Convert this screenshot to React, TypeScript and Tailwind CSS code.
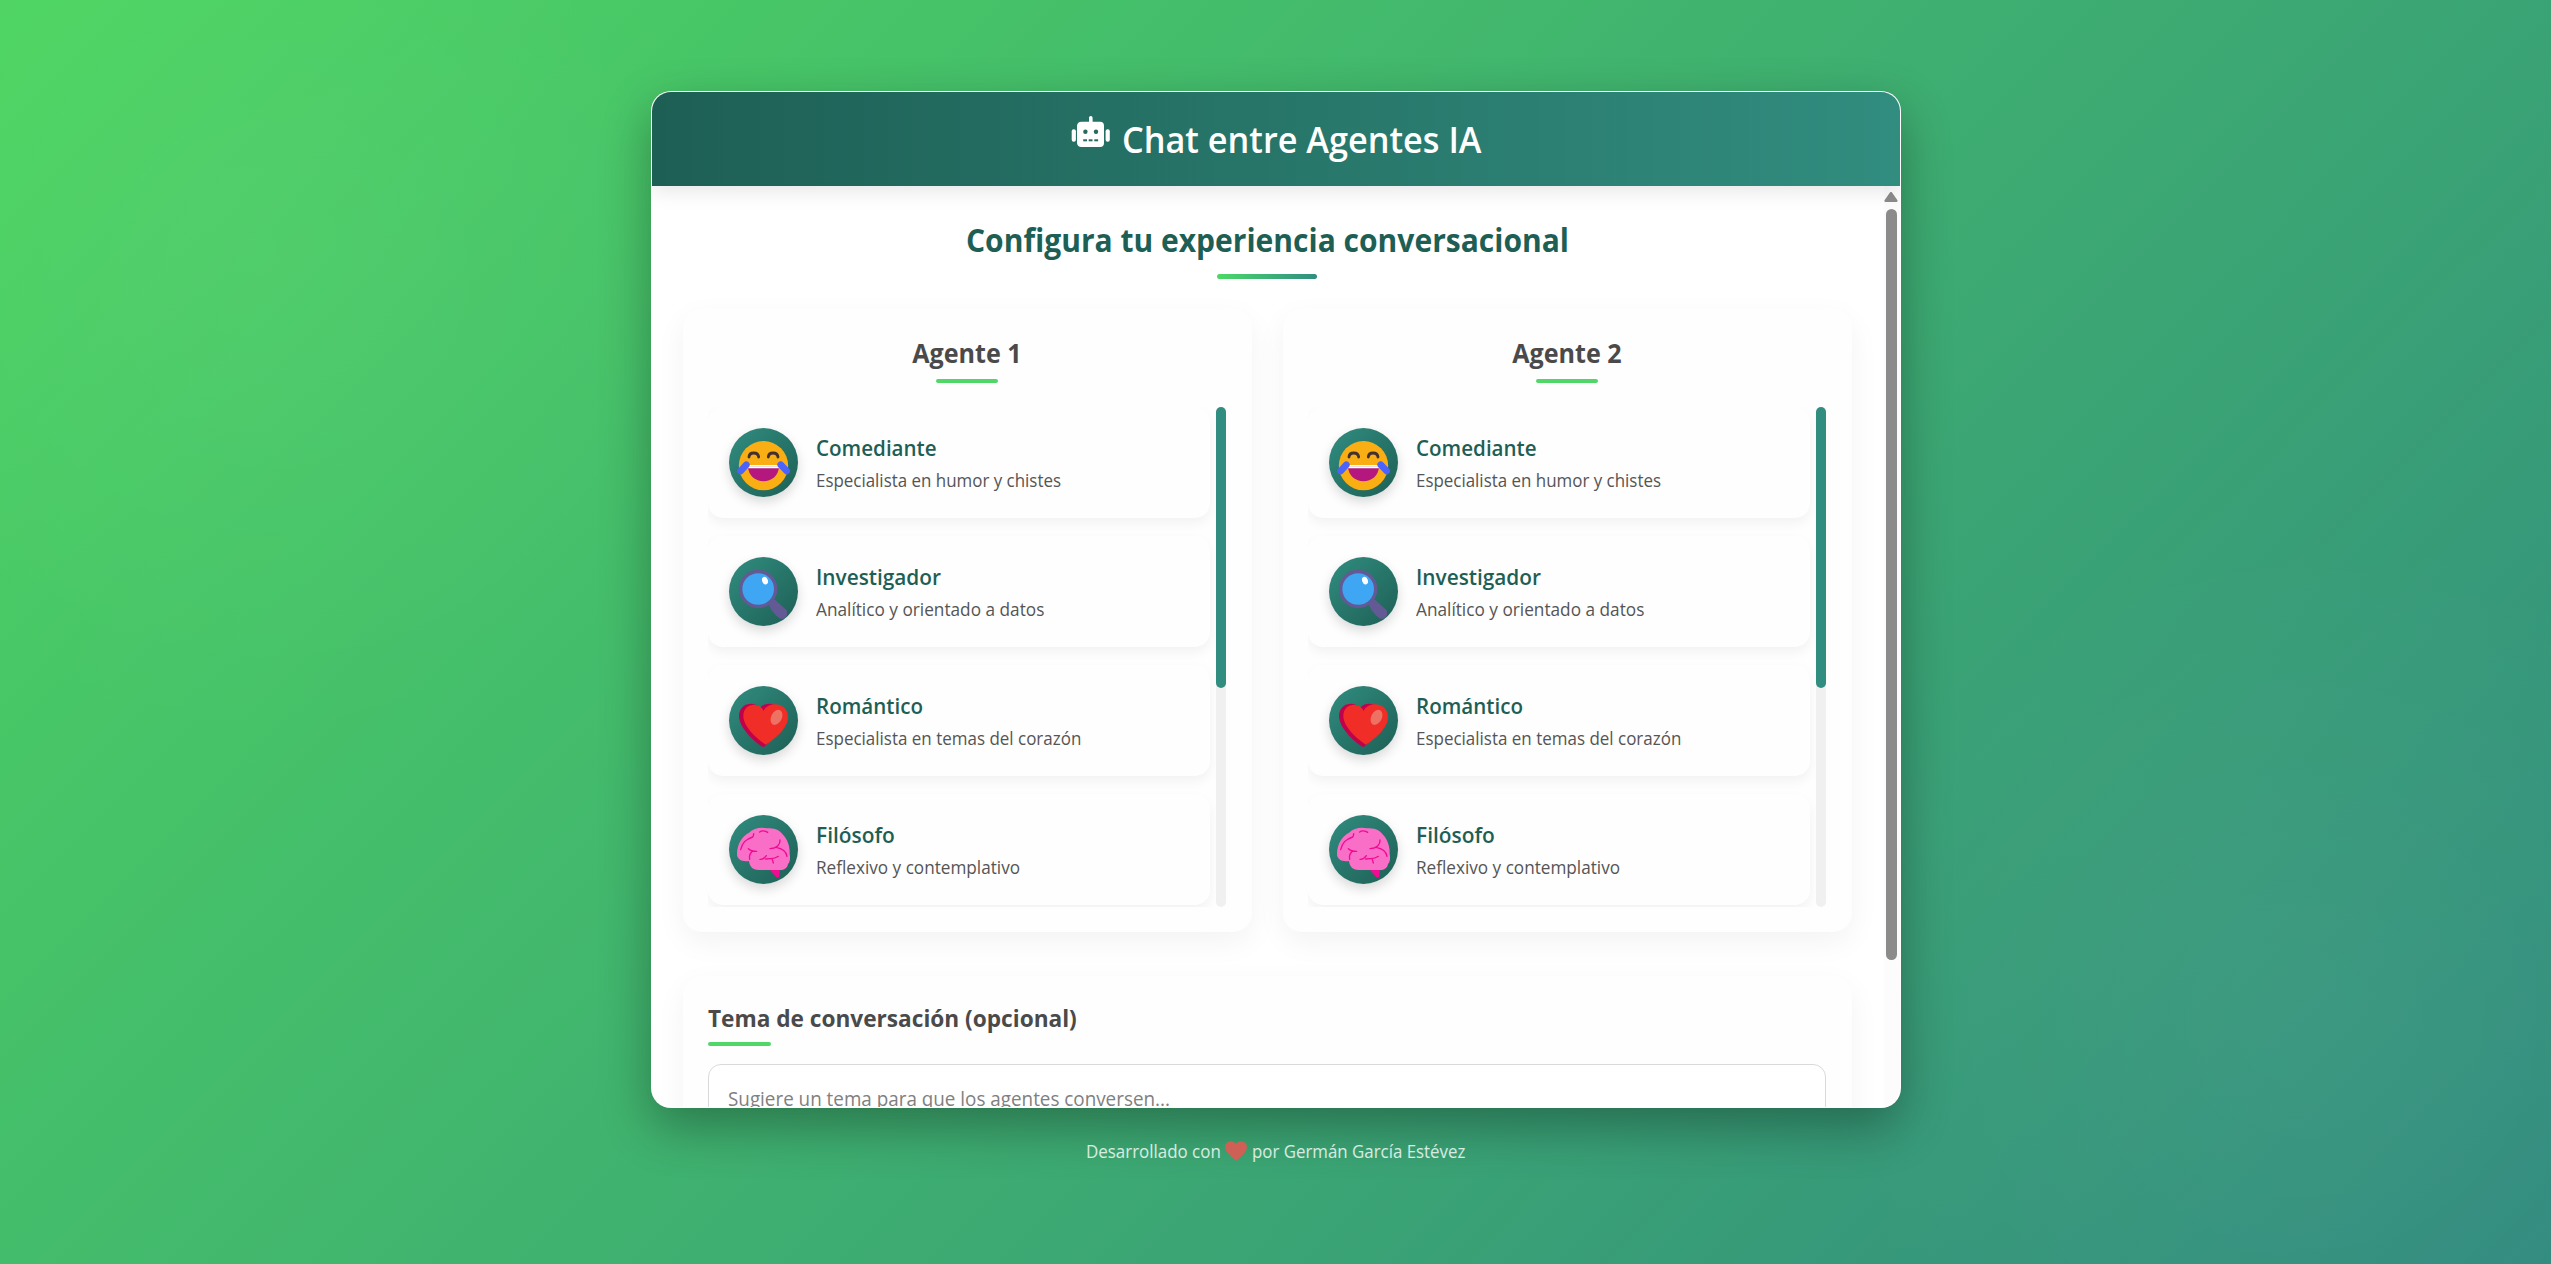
import React from "react";

function RobotIcon() {
  return (
    <svg viewBox="6 5 40 33" className="h-[33px] w-10 shrink-0" fill="#fff">
      <rect x="24" y="6" width="3.6" height="10" rx="1.8" />
      <path d="M16.500 11.700H35a4 4 0 0 1 4 4V33a4 4 0 0 1-4 4H16.500a4.500 4.500 0 0 1-4.500-4V15.700a4.500 4.500 0 0 1 4.500-4Z" />
      <rect x="6.700" y="19.300" width="4.200" height="12.500" rx="2" />
      <rect x="40.600" y="19.300" width="4.200" height="12.500" rx="2" />
      <g fill="#25695f">
        <circle cx="20.400" cy="21.700" r="2.200" />
        <circle cx="31" cy="21.700" r="2.200" />
        <rect x="18.200" y="29.300" width="3.800" height="2" />
        <rect x="23.700" y="29.300" width="3.800" height="2" />
        <rect x="29.300" y="29.300" width="3.800" height="2" />
      </g>
    </svg>
  );
}

function LaughIcon() {
  return (
    <svg viewBox="27 23 207 207" className="size-full">
      <circle cx="130.500" cy="136" r="74" fill="#f9ae14" />
      <g fill="none" stroke="#44302f" strokeWidth="8.500" strokeLinecap="round">
        <path d="M87 110c1-16 27-16 29 0" />
        <path d="M145 110c1-16 27-16 29 0" />
      </g>
      <path d="M84 137H177C176 198 85 198 84 137Z" fill="#b4177e" />
      <path d="M83 134H178L176 144H85Z" fill="#fff" />
      <path d="M83 138H178" stroke="#c7b3c4" strokeWidth="1.500" />
      <g stroke="#4c63fb" strokeWidth="20" strokeLinecap="round">
        <path d="M62 152L79 133" />
        <path d="M182 133L200 152" />
      </g>
    </svg>
  );
}

function LensIcon() {
  return (
    <svg viewBox="27 21 207 207" className="size-full">
      <path d="M146 149L163 166" stroke="#635994" strokeWidth="9" />
      <path d="M148 168C143 155 155 146 167 151L199 180C207 194 195 210 181 206C170 200 153 181 148 168Z" fill="#635994" />
      <circle cx="114.500" cy="117" r="52.500" fill="#3ea6f2" stroke="#635994" strokeWidth="10" />
      <ellipse cx="135" cy="92" rx="8.500" ry="11.500" fill="#fff" transform="rotate(-22 135 92)" />
    </svg>
  );
}

function HeartIcon() {
  return (
    <svg viewBox="27 33 207 207" className="size-full">
      <path d="M131 216C124 218 57 165 57 123C57 86 100 75 120 99C135 76 186 85 190 118C194 160 137 214 131 216Z" fill="#c2014d" />
      <path d="M138 209C124 201 70 160 70 123C70 85 118 78 131 108C143 77 204 80 204 127C204 162 156 199 138 209Z" fill="#f02d26" />
      <ellipse cx="169.500" cy="127" rx="16" ry="24" fill="#ee7263" transform="rotate(27 169.500 127)" />
    </svg>
  );
}

function BrainIcon() {
  return (
    <svg viewBox="27 29 207 207" className="size-full">
      <path d="M147 190H180L178 213C176 219 171 218 168 214Z" fill="#f10a92" />
      <path
        d="M51 146C51 117 66 92 87 82C100 69 122 65 141 69C162 66 181 75 189 88C203 102 210 124 209 145C212 160 209 171 204 176C202 188 192 194 181 194H115C98 194 88 182 87 167C65 170 51 162 51 146Z"
        fill="#f96fc8"
      />
      <g fill="none" stroke="#f10a92" strokeWidth="4" strokeLinecap="round">
        <path d="M62 133C68 111 75 103 98 95C100 92 101 88 101 85" />
        <path d="M119 80C125 75 136 76 143 81" />
        <path d="M85 130C90 135 94 138 110 138M98 137C89 145 87 153 89 162" />
        <path d="M180 104C181 116 172 129 150 130M168 126C185 129 199 139 201 153" />
        <path d="M120 162C130 163 135 157 139 151M137 161C155 158 160 164 175 153M157 163L160 173" />
      </g>
    </svg>
  );
}

const agents = [
  { name: "Comediante", nameCls: "scale-x-[0.935]", text: "Especialista en humor y chistes", textCls: "scale-x-[0.94]", Icon: LaughIcon },
  { name: "Investigador", nameCls: "scale-x-[0.945]", text: "Analítico y orientado a datos", textCls: "scale-x-[0.957]", Icon: LensIcon },
  { name: "Romántico", nameCls: "scale-x-[0.935]", text: "Especialista en temas del corazón", textCls: "scale-x-[0.943]", Icon: HeartIcon },
  { name: "Filósofo", nameCls: "scale-x-[0.95]", text: "Reflexivo y contemplativo", textCls: "scale-x-[0.953]", Icon: BrainIcon },
];

function AgentColumn({ title }: { title: string }) {
  return (
    <section className="flex h-[623px] flex-1 flex-col rounded-[19px] bg-[#fefefe] px-[25.500px] pt-[27px] shadow-[0_10px_30px_rgba(0,0,0,0.05)]">
      <h3 className="scale-x-[0.965] text-center text-[26px] leading-[34px] font-bold text-[#4a4a4a]">{title}</h3>
      <div className="mx-auto mt-[9px] h-[3.500px] w-[62.500px] rounded-sm bg-[#50d768]" />
      <div className="mt-[24.500px] flex h-[500px] justify-between">
        <div className="flex w-[508px] flex-col gap-[18px] overflow-hidden pr-[6px]">
          {agents.map(({ name, nameCls, text, textCls, Icon }) => (
            <div
              key={name}
              className="flex h-[111px] shrink-0 items-center rounded-[15px] bg-[#fefefe] px-[21px] shadow-[0_5px_12px_rgba(0,0,0,0.05)]"
            >
              <div className="size-[69px] overflow-hidden rounded-full bg-linear-135 from-[#318d80] to-[#1e5f55] shadow-[0_5px_12px_rgba(0,0,0,0.15)]">
                <Icon />
              </div>
              <div className="ml-[18px] pt-0.5">
                <div className={"origin-left text-[22px] leading-[33px] font-semibold text-[#1e5f55] " + nameCls}>{name}</div>
                <div className={"origin-left text-[18px] leading-[32px] text-[#555] " + textCls}>{text}</div>
              </div>
            </div>
          ))}
        </div>
        <div className="h-full w-2.5 rounded-full bg-[#f0f0f0]">
          <div className="h-[281px] rounded-full bg-[#318d7f]" />
        </div>
      </div>
    </section>
  );
}

export default function App() {
  return (
    <div className="flex h-[1264px] w-full flex-col items-center bg-[radial-gradient(circle_at_10%_20%,rgba(255,255,255,0.045)_0%,transparent_20%),radial-gradient(circle_at_90%_80%,rgba(255,255,255,0.045)_0%,transparent_20%),linear-gradient(135deg,#4dd561_0%,#318b7f_100%)] pt-[91px] font-['Open_Sans','Noto_Sans',sans-serif]">
      <main className="flex h-[1017px] w-[1250px] flex-col overflow-hidden rounded-[20px] border border-white/80 bg-white shadow-[0_19px_50px_rgba(0,0,0,0.32)]">
        <header className="relative z-10 flex h-[94px] shrink-0 items-center justify-center gap-[11px] bg-linear-to-r from-[#1e5f55] to-[#318d7f] pr-px shadow-[0_5px_20px_rgba(0,0,0,0.1)]">
          <div className="-mt-[15px]">
            <RobotIcon />
          </div>
          <h1 className="mt-px w-[358px] origin-left scale-x-[0.952] text-[36px] leading-[44px] font-semibold whitespace-nowrap text-white">
            Chat entre Agentes IA
          </h1>
        </header>

        <div className="flex h-[921px] overflow-hidden">
          <div className="flex flex-1 flex-col pt-[34px] pr-8 pl-[31px]">
            <h2 className="scale-x-[0.938] text-center text-[32px] leading-10 font-bold text-[#1e5f55]">
              Configura tu experiencia conversacional
            </h2>
            <div className="mx-auto mt-[14px] h-[5px] w-[100px] shrink-0 rounded-full bg-linear-to-r from-[#4cd964] to-[#318d80]" />
            <div className="mt-[30px] flex shrink-0 gap-[31px]">
              <AgentColumn title="Agente 1" />
              <AgentColumn title="Agente 2" />
            </div>
            <section className="mt-11 h-[300px] shrink-0 rounded-[19px] bg-[#fefefe] px-[25.500px] pt-[26px] shadow-[0_10px_30px_rgba(0,0,0,0.05)]">
              <h3 className="origin-left scale-x-[0.943] text-[24px] leading-8 font-bold text-[#4a4a4a]">Tema de conversación (opcional)</h3>
              <div className="mt-2 h-1 w-[62.500px] rounded-sm bg-[#50d768]" />
              <div className="mt-[18px] h-[125px] rounded-[13px] border border-[#d9d9d9] bg-white px-[19px] pt-[19px] text-[20px] leading-[30px] text-[#808080]">
                <p className="origin-left scale-x-[0.942]">Sugiere un tema para que los agentes conversen...</p>
              </div>
            </section>
          </div>
          <div className="flex w-5 flex-col items-center bg-[#fcfcfc] pt-[6px] pr-px">
            <svg viewBox="0 0 14 10" className="h-2.5 w-3.5 shrink-0" fill="#8b8b8b">
              <path d="M5.800 0.700a1.500 1.500 0 0 1 2.400 0L13.300 8a1.200 1.200 0 0 1-1 2H1.700A1.200 1.200 0 0 1 0.700 8Z" />
            </svg>
            <div className="mt-[7px] h-[751px] w-[11px] shrink-0 rounded-full bg-[#8b8b8b]" />
          </div>
        </div>
      </main>

      <footer className="mt-7 flex items-center pr-px text-[18px] leading-[30px] whitespace-nowrap text-white/80">
        <span className="w-[134px] origin-left scale-x-[0.94]">Desarrollado con</span>
        <svg viewBox="0 0 22 20" className="mr-[5px] ml-[5px] -mt-px h-5 w-[22px]" fill="#cf6055">
          <path d="M11 20C7 16 0 11.500 0 6C0 0.500 7.500-2 11 3C14.500-2 22 0.500 22 6C22 11.500 15 16 11 20Z" />
        </svg>
        <span className="w-[212px] origin-left scale-x-[0.937]">por Germán García Estévez</span>
      </footer>
    </div>
  );
}
